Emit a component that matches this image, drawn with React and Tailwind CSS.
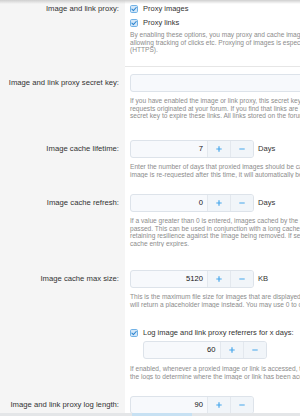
import React from 'react'

const font = "font-['Liberation_Sans',Arial,sans-serif]"

function CheckBox() {
  return (
    <svg width="8" height="8" viewBox="0 0 8 8" className="shrink-0">
      <rect x="0.5" y="0.5" width="7" height="7" rx="1.2" fill="#d3e7f8" stroke="#72b2e6" strokeWidth="1" />
      <path d="M1.9 4.1 L3.4 5.6 L6.2 2.5" fill="none" stroke="#2f86d0" strokeWidth="1.1" strokeLinecap="round" strokeLinejoin="round" />
    </svg>
  )
}

function Plus() {
  return (
    <svg width="6" height="6" viewBox="0 0 6 6">
      <path d="M3 0.3 V5.7 M0.3 3 H5.7" stroke="#47a7eb" strokeWidth="1.2" />
    </svg>
  )
}

function Minus() {
  return (
    <svg width="6" height="6" viewBox="0 0 6 6">
      <path d="M0.3 3 H5.7" stroke="#47a7eb" strokeWidth="1.2" />
    </svg>
  )
}

function NumberBox({ value, unit }) {
  return (
    <div className="flex items-center">
      <div className="flex h-[18px] w-[124px] overflow-hidden rounded-[3px] border border-[#dde3ea] bg-[#f7f9fc]">
        <div className="flex-1 pr-[4px] text-right text-[7.6px] leading-[16px] text-[#141414]">{value}</div>
        <div className="flex w-[23px] items-center justify-center border-l border-[#e3e8ee] bg-[#f1f5f9]">
          <Plus />
        </div>
        <div className="flex w-[23px] items-center justify-center border-l border-[#e3e8ee] bg-[#f1f5f9]">
          <Minus />
        </div>
      </div>
      {unit && <span className="pl-[4px] text-[7.6px] text-[#333]">{unit}</span>}
    </div>
  )
}

function Explain({ lines, className = 'mt-[5px]' }) {
  return (
    <div className={`${className} text-[6.6px] leading-[7.5px] text-[#8c8c8c]`}>
      {lines.map((l, i) => (
        <div key={i} className="whitespace-nowrap">
          {l}
        </div>
      ))}
    </div>
  )
}

function Row({ label, pt, children }) {
  return (
    <div className="flex">
      <div
        className="w-[125px] shrink-0 bg-[#f5f5f5] pr-[6px] text-right text-[7.7px] leading-[18px] text-[#333]"
        style={{ paddingTop: pt }}
      >
        {label}
      </div>
      <div className="min-w-0 flex-1 overflow-hidden bg-white pl-[5px]" style={{ paddingTop: pt }}>
        {children}
      </div>
    </div>
  )
}

function CheckLine({ children }) {
  return (
    <div className="flex h-[14px] items-center gap-[5px] whitespace-nowrap text-[7.5px] text-[#333]">
      <CheckBox />
      <span>{children}</span>
    </div>
  )
}

export default function App() {
  return (
    <div className={`relative h-[416px] w-[300px] overflow-hidden bg-white ${font}`}>
      <div>
        {/* proxy toggles */}
        <div className="flex">
          <div className="w-[125px] shrink-0 bg-[#f5f5f5] pr-[6px] pt-[2px] text-right text-[7.7px] leading-[14px] text-[#333]">
            Image and link proxy:
          </div>
          <div className="min-w-0 flex-1 overflow-hidden border-b border-[#e6e6e6] bg-white pb-[12.5px] pl-[5px] pt-[2px]">
            <CheckLine>Proxy images</CheckLine>
            <CheckLine>Proxy links</CheckLine>
            <Explain
              className="mt-[1px]"
              lines={[
                'By enabling these options, you may proxy and cache images and links from remote sites, preventing',
                'allowing tracking of clicks etc. Proxying of images is especially useful if your site is served over',
                '(HTTPS).',
              ]}
            />
          </div>
        </div>

        <Row label="Image and link proxy secret key:" pt="7px">
          <div className="h-[18px] w-[400px] rounded-[3px] border border-[#dde3ea] bg-[#f7f9fc]" />
          <Explain
            lines={[
              'If you have enabled the image or link proxy, this secret key is used to verify that the proxy',
              'requests originated at your forum. If you find that links are being abused, you can change the',
              'secret key to expire these links. All links stored on the forum will continue to work.',
            ]}
          />
        </Row>

        <Row label="Image cache lifetime:" pt="20.5px">
          <NumberBox value="7" unit="Days" />
          <Explain
            lines={[
              'Enter the number of days that proxied images should be cached for. If a cached',
              'image is re-requested after this time, it will automatically be refreshed.',
            ]}
          />
        </Row>

        <Row label="Image cache refresh:" pt="16px">
          <NumberBox value="0" unit="Days" />
          <Explain
            lines={[
              'If a value greater than 0 is entered, images cached by the proxy will be refreshed once',
              'passed. This can be used in conjunction with a long cache lifetime to keep images fresh while',
              'retaining resilience against the image being removed. If set to 0, images refresh when the',
              'cache entry expires.',
            ]}
          />
        </Row>

        <Row label="Image cache max size:" pt="23px">
          <NumberBox value="5120" unit="KB" />
          <Explain
            lines={[
              'This is the maximum file size for images that are displayed through the proxy. Larger images',
              'will return a placeholder image instead. You may use 0 to disable this limit.',
            ]}
          />
        </Row>

        <Row label="" pt="18px">
          <CheckLine>Log image and link proxy referrers for x days:</CheckLine>
          <div className="mt-[1px] pl-[12.5px]">
            <NumberBox value="60" />
          </div>
          <Explain
            className="mt-[6px]"
            lines={[
              'If enabled, whenever a proxied image or link is accessed, the referrer will be logged. You can view',
              'the logs to determine where the image or link has been accessed from.',
            ]}
          />
        </Row>

        <Row label="Image and link proxy log length:" pt="16px">
          <NumberBox value="90" />
          <div className="h-[30px]" />
        </Row>
      </div>

      {/* header shadow */}
      <div className="absolute left-0 right-0 top-0 h-[4px] bg-gradient-to-b from-[#cfcfcf] to-transparent" />
      {/* bottom bar edge */}
      <div className="absolute bottom-0 left-0 right-0 h-[3px] bg-[#e4e6e8]">
        <div className="ml-[132px] h-full w-[60px] bg-[#c7e1f3]" />
      </div>
    </div>
  )
}
